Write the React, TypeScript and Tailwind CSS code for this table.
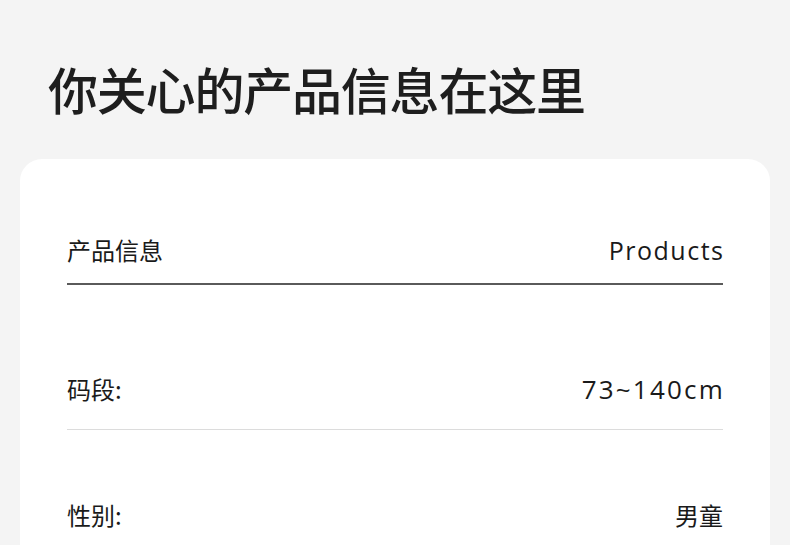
import React from "react";

const cjk = { fontFamily: '"Noto Sans CJK SC", "Noto Sans", sans-serif' };
const latin = { fontFamily: '"Open Sans", "Noto Sans CJK SC", sans-serif' };

export default function App() {
  return (
    <div className="w-[790px] h-[545px] overflow-hidden bg-[#f4f4f4]" style={cjk}>
      <h1 className="pl-[48px] pt-[60px] h-[159px] text-[50px] leading-[56px] tracking-[-1.2px] font-medium text-[#1e1e1e]">
        你关心的产品信息在这里
      </h1>
      <div className="mx-[20px] bg-white rounded-t-[22px] px-[47px] h-[400px]">
        <div className="pt-[75px] pb-[17px] flex items-center justify-between border-b-2 border-[#5a5a5a]">
          <span className="text-[24px] leading-[32px] text-[#1a1a1a]">产品信息</span>
          <span className="text-[25px] leading-[32px] tracking-[1.5px] -mr-[1.5px] text-[#1a1a1a]" style={latin}>Products</span>
        </div>
        <div className="pt-[88px] pb-[24px] flex items-center justify-between border-b border-[#dcdcdc]">
          <span className="text-[24px] leading-[32px] text-[#1a1a1a]">码段:</span>
          <span className="text-[26px] leading-[32px] tracking-[2.2px] -mr-[2px] text-[#1a1a1a]" style={latin}>73~140cm</span>
        </div>
        <div className="pt-[69px] flex items-center justify-between">
          <span className="text-[24px] leading-[32px] text-[#1a1a1a]">性别:</span>
          <span className="text-[24px] leading-[32px] text-[#1a1a1a]">男童</span>
        </div>
      </div>
    </div>
  );
}
